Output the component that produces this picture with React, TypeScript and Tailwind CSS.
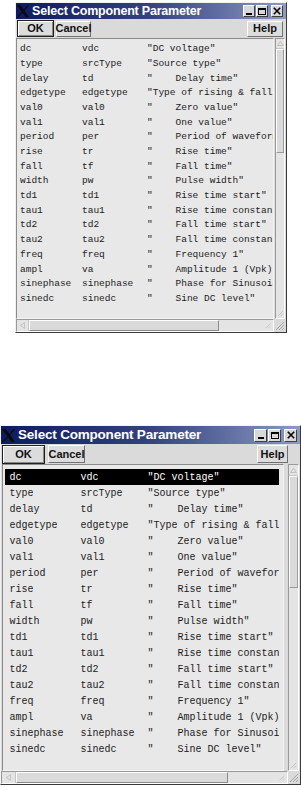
import React from "react";

type Row = [string, string, string];

const ROWS: Row[] = [
  ["dc", "vdc", '"DC voltage"'],
  ["type", "srcType", '"Source type"'],
  ["delay", "td", '"    Delay time"'],
  ["edgetype", "edgetype", '"Type of rising & falling edges"'],
  ["val0", "val0", '"    Zero value"'],
  ["val1", "val1", '"    One value"'],
  ["period", "per", '"    Period of waveform"'],
  ["rise", "tr", '"    Rise time"'],
  ["fall", "tf", '"    Fall time"'],
  ["width", "pw", '"    Pulse width"'],
  ["td1", "td1", '"    Rise time start"'],
  ["tau1", "tau1", '"    Rise time constant"'],
  ["td2", "td2", '"    Fall time start"'],
  ["tau2", "tau2", '"    Fall time constant"'],
  ["freq", "freq", '"    Frequency 1"'],
  ["ampl", "va", '"    Amplitude 1 (Vpk)"'],
  ["sinephase", "sinephase", '"    Phase for Sinusoidal"'],
  ["sinedc", "sinedc", '"    Sine DC level"'],
];

type Sizes = {
  frame: string;
  title: string;
  titleText: string;
  logo: string;
  ctl: string;
  btnRow: string;
  ok: string;
  cancel: string;
  help: string;
  body: string;
  list: string;
  listPad: string;
  row: string;
  c1: string;
  c2: string;
  vscroll: string;
  upArrow: string;
  thumb: string;
  hscroll: string;
  harrow: string;
  hthumb: string;
};

const SMALL: Sizes = {
  frame: "ml-[15px] mt-[2px] w-[272px]",
  title: "h-[16px]",
  titleText: "text-[12.5px] ml-[2px]",
  logo: "h-[14px] w-[14px]",
  ctl: "h-[12px] w-[12px]",
  btnRow: "h-[19px] pl-[1px] pr-[3px] gap-[2px]",
  ok: "h-[17px] w-[37px]",
  cancel: "h-[16px] w-[35px]",
  help: "h-[16px] w-[36px]",
  body: "h-[281px]",
  list: "w-[258px]",
  listPad: "pt-[3px]",
  row: "h-[14.7px] pl-[3px] text-[9.5px]",
  c1: "w-[62px]",
  c2: "w-[65px]",
  vscroll: "ml-[1px] w-[10px]",
  upArrow: "h-[10px]",
  thumb: "h-[104px]",
  hscroll: "h-[13px]",
  harrow: "w-[12px]",
  hthumb: "w-[190px]",
};

const LARGE: Sizes = {
  frame: "mt-[92px] w-[301px]",
  title: "h-[18px]",
  titleText: "text-[13.5px] ml-[2px]",
  logo: "h-[15px] w-[15px]",
  ctl: "h-[13px] w-[13px]",
  btnRow: "h-[20px] pl-[1px] pr-[12px] gap-[3px]",
  ok: "h-[19px] w-[43px]",
  cancel: "h-[18px] w-[37px]",
  help: "h-[18px] w-[31px]",
  body: "h-[307px] pl-[1px]",
  list: "w-[282px] pl-[2px] pr-[4px]",
  listPad: "pt-[4px]",
  row: "h-[16px] pl-[4.5px] text-[10px]",
  c1: "w-[71px]",
  c2: "w-[67px]",
  vscroll: "ml-[4px] w-[11px]",
  upArrow: "h-[11px]",
  thumb: "h-[112px]",
  hscroll: "h-[13px]",
  harrow: "w-[14px]",
  hthumb: "w-[212px]",
};

function XLogo({ cls }: { cls: string }) {
  return (
    <svg viewBox="0 0 16 16" className={cls}>
      <polygon points="1,1 5,1 15,15 11,15" fill="#0a0a0a" />
      <polygon points="13.5,1 15,1 9.5,8 8.7,6.9" fill="#0a0a0a" />
      <polygon points="6.5,9 7.3,10.1 2.5,15 1,15" fill="#0a0a0a" />
    </svg>
  );
}

function WinCtl({ cls, kind }: { cls: string; kind: "min" | "max" | "close" }) {
  return (
    <div
      className={`${cls} flex items-center justify-center border border-t-white border-l-white border-r-[#404040] border-b-[#404040] bg-[#d8d8d8]`}
    >
      {kind === "min" && <div className="mt-[5px] h-[2px] w-[6px] bg-black" />}
      {kind === "max" && <div className="h-[7px] w-[8px] border border-t-2 border-black" />}
      {kind === "close" && (
        <svg viewBox="0 0 10 10" className="h-[8px] w-[8px]">
          <path d="M1 1L9 9M9 1L1 9" stroke="#000" strokeWidth="2" />
        </svg>
      )}
    </div>
  );
}

function Btn({ cls, label, isDefault }: { cls: string; label: string; isDefault?: boolean }) {
  return (
    <div
      className={`${cls} flex items-center justify-center bg-[#dcdcdc] text-[11px] font-bold text-[#111] ${
        isDefault
          ? "border border-[#202020] shadow-[inset_1px_1px_0_#fff,inset_-1px_-1px_0_#888]"
          : "border border-t-white border-l-white border-r-[#707070] border-b-[#707070]"
      }`}
    >
      {label}
    </div>
  );
}

function Dialog({ s, selectFirst }: { s: Sizes; selectFirst?: boolean }) {
  return (
    <div
      className={`${s.frame} flex flex-col border border-t-[#f2f2f2] border-l-[#f2f2f2] border-r-[#3a3a3a] border-b-[#3a3a3a] bg-[#dadada] font-['Liberation_Sans',Arial,sans-serif]`}
    >
      <div
        className={`${s.title} flex items-center bg-gradient-to-r from-[#0d1a60] via-[#34437f] to-[#8d9ac2] pr-[3px]`}
      >
        <XLogo cls={s.logo} />
        <span className={`${s.titleText} font-bold leading-none tracking-[-0.2px] text-white`}>
          Select Component Parameter
        </span>
        <div className="ml-auto flex gap-[1px]">
          <WinCtl cls={s.ctl} kind="min" />
          <WinCtl cls={s.ctl} kind="max" />
          <div className="w-[1px]" />
          <WinCtl cls={s.ctl} kind="close" />
        </div>
      </div>

      <div className={`${s.btnRow} flex items-center`}>
        <Btn cls={s.ok} label="OK" isDefault />
        <Btn cls={s.cancel} label="Cancel" />
        <div className="flex-1" />
        <Btn cls={s.help} label="Help" />
      </div>

      <div className={`${s.body} flex`}>
        <div
          className={`${s.list} ${s.listPad} border border-t-[#8a8a8a] border-l-[#8a8a8a] border-r-[#f4f4f4] border-b-[#f4f4f4] bg-[#e8e8e8] font-['Liberation_Mono','Courier_New',monospace] text-[#1c1c1c]`}
        >
          <div className="overflow-hidden">
            {ROWS.map((r, i) => {
              const sel = selectFirst && i === 0;
              return (
                <div
                  key={r[0]}
                  className={`${s.row} flex items-center whitespace-pre ${sel ? "bg-black text-white" : ""}`}
                >
                  <span className={`${s.c1} shrink-0`}>{r[0]}</span>
                  <span className={`${s.c2} shrink-0`}>{r[1]}</span>
                  <span className="shrink-0">{r[2]}</span>
                </div>
              );
            })}
          </div>
        </div>
        <div className={`${s.vscroll} flex flex-col border border-t-[#9a9a9a] border-l-[#9a9a9a] border-r-white border-b-white bg-[#e4e4e4]`}>
          <div className={`${s.upArrow} flex items-center justify-center border-b border-[#c4c4c4]`}>
            <svg viewBox="0 0 8 6" className="h-[5px] w-[7px]">
              <path d="M4 0.5L7.5 5.5H0.5Z" fill="none" stroke="#b8b8b8" strokeWidth="1" />
            </svg>
          </div>
          <div className={`${s.thumb} border border-t-white border-l-white border-r-[#9a9a9a] border-b-[#9a9a9a] bg-[#dadada]`} />
          <div className="flex-1" />
          <div className="flex h-[10px] items-center justify-center">
            <svg viewBox="0 0 8 8" className="h-[7px] w-[7px]">
              <path d="M7 1L1 7M7 4L4 7" stroke="#c0c0c0" strokeWidth="1" />
            </svg>
          </div>
        </div>
      </div>

      <div className={`${s.hscroll} flex`}>
        <div className="flex flex-1 border border-t-[#9a9a9a] border-l-[#9a9a9a] border-r-white border-b-white bg-[#e4e4e4]">
          <div className={`${s.harrow} flex items-center justify-center border-r border-[#c4c4c4]`}>
            <svg viewBox="0 0 6 8" className="h-[7px] w-[5px]">
              <path d="M0.5 4L5.5 0.5V7.5Z" fill="none" stroke="#bcbcbc" strokeWidth="1" />
            </svg>
          </div>
          <div className={`${s.hthumb} border border-t-white border-l-white border-r-[#8a8a8a] border-b-[#8a8a8a] bg-[#dadada]`} />
          <div className="flex flex-1 items-center justify-end pr-[2px]">
            <svg viewBox="0 0 8 8" className="h-[7px] w-[7px]">
              <path d="M7 2L2 7M7 5L5 7" stroke="#c4c4c4" strokeWidth="1" />
            </svg>
          </div>
        </div>
        <div className="flex w-[12px] items-end justify-end pb-[1px] pr-[1px]">
          <svg viewBox="0 0 10 10" className="h-[10px] w-[10px]">
            <path d="M9 1L1 9M9 4L4 9M9 7L7 9" stroke="#a8a8a8" strokeWidth="1" />
          </svg>
        </div>
      </div>
    </div>
  );
}

export default function App() {
  return (
    <div className="flex h-[790px] w-[301px] flex-col overflow-hidden bg-white">
      <Dialog s={SMALL} />
      <Dialog s={LARGE} selectFirst />
    </div>
  );
}
